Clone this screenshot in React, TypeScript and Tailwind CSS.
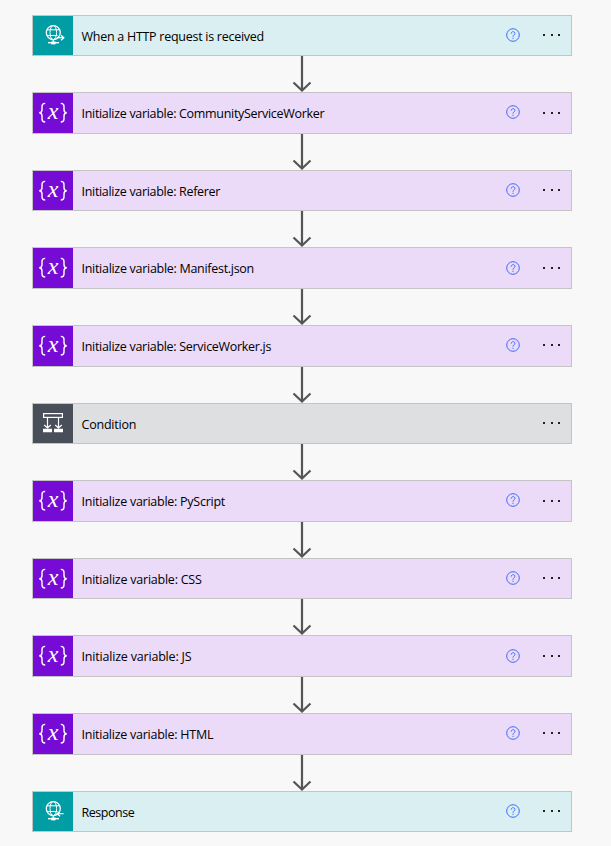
import React from "react";

type Kind = "request" | "variable" | "condition" | "response";

interface Step {
  kind: Kind;
  label: string;
  tracking: string;
}

const steps: Step[] = [
  { kind: "request", label: "When a HTTP request is received", tracking: "tracking-[-0.27px]" },
  { kind: "variable", label: "Initialize variable: CommunityServiceWorker", tracking: "tracking-[-0.31px]" },
  { kind: "variable", label: "Initialize variable: Referer", tracking: "tracking-[-0.31px]" },
  { kind: "variable", label: "Initialize variable: Manifest.json", tracking: "tracking-[-0.29px]" },
  { kind: "variable", label: "Initialize variable: ServiceWorker.js", tracking: "tracking-[-0.3px]" },
  { kind: "condition", label: "Condition", tracking: "tracking-[-0.22px]" },
  { kind: "variable", label: "Initialize variable: PyScript", tracking: "tracking-[-0.26px]" },
  { kind: "variable", label: "Initialize variable: CSS", tracking: "tracking-[-0.23px]" },
  { kind: "variable", label: "Initialize variable: JS", tracking: "tracking-[-0.19px]" },
  { kind: "variable", label: "Initialize variable: HTML", tracking: "tracking-[-0.25px]" },
  { kind: "response", label: "Response", tracking: "tracking-[-0.45px]" },
];

const cardColor: Record<Kind, string> = {
  request: "bg-[#d9eff1]",
  response: "bg-[#d9eff1]",
  variable: "bg-[#ebdaf8]",
  condition: "bg-[#dddfe1]",
};

const tileColor: Record<Kind, string> = {
  request: "bg-[#009da5]",
  response: "bg-[#009da5]",
  variable: "bg-[#770bd6]",
  condition: "bg-[#484f58]",
};

const labelOffset: Record<Kind, string> = {
  request: "pt-[3.2px]",
  response: "pt-[3.2px]",
  variable: "pt-[2.2px]",
  condition: "pt-[3.2px]",
};

function GlobeIcon({ incoming }: { incoming: boolean }) {
  return (
    <svg width="40" height="40" viewBox="0 0 40 40" fill="none" stroke="#fff" strokeWidth="1">
      <circle cx="20.3" cy="17.6" r="7" strokeWidth="1.3" />
      <ellipse cx="20.3" cy="17.6" rx="3.3" ry="7" />
      <path d="M14 14.8h12.6M13.5 20.5h11" />
      <path d="M20.3 24.5v2" strokeWidth="1.4" />
      <path d="M15 27.7h11" strokeWidth="1.4" />
      <path d="M18.3 27.9h4.2" strokeWidth="3" />
      {incoming ? (
        <path d="M30.5 22.7h-6M27 20.2l-2.8 2.5L27 25.2" strokeWidth="1.3" />
      ) : (
        <path d="M24 22.7h6M28 20.2l2.8 2.5L28 25.2" strokeWidth="1.3" />
      )}
    </svg>
  );
}

function VariableIcon() {
  return (
    <svg width="40" height="40" viewBox="0 0 40 40" fill="none" stroke="#fff" strokeWidth="1.4">
      <path d="M12.2 10.4c-2.6 0-3.2 1.1-3.2 3v3.1c0 2-.8 3.2-2.8 3.2 2 0 2.800 1.200 2.800 3.200v3.100c0 1.900.6 3 3.200 3" />
      <path d="M27.800 10.400c2.600 0 3.200 1.100 3.200 3v3.100c0 2 .8 3.200 2.800 3.200-2 0-2.800 1.200-2.800 3.200v3.100c0 1.900-.6 3-3.200 3" />
      <text
        x="20"
        y="26"
        textAnchor="middle"
        fill="#fff"
        stroke="none"
        className="font-['Liberation_Serif',serif] text-[24px] italic"
      >
        x
      </text>
    </svg>
  );
}

function ConditionIcon() {
  return (
    <svg width="40" height="40" viewBox="0 0 40 40" fill="none" stroke="#fff" strokeWidth="1.2">
      <rect x="10.6" y="10.6" width="18.8" height="3.8" />
      <path d="M14.5 14.5v10.5M25.5 14.5v10.5M11.2 22l3.3 3 3.3-3M22.2 22l3.3 3 3.3-3" />
      <path d="M10 27.5h9M21 27.5h9" strokeWidth="3.4" />
    </svg>
  );
}

function StepIcon({ kind }: { kind: Kind }) {
  if (kind === "variable") return <VariableIcon />;
  if (kind === "condition") return <ConditionIcon />;
  return <GlobeIcon incoming={kind === "response"} />;
}

function HelpIcon() {
  return (
    <svg width="14" height="14" viewBox="0 0 14 14" fill="none" stroke="#3d6cff" strokeWidth="1">
      <circle cx="7" cy="7" r="6.3" />
      <path d="M5.2 5.6c0-2.5 3.7-2.5 3.7-.2 0 1.5-1.9 1.5-1.9 3.3M7 9.8v1.1" />
    </svg>
  );
}

function Connector() {
  return (
    <div className="flex h-9 justify-center">
      <svg className="block" width="20" height="36" viewBox="0 0 20 36" fill="none" stroke="#555" strokeWidth="2.2">
        <path d="M10 0v34.5M1.5 26.5l8.5 8 8.5-8" />
      </svg>
    </div>
  );
}

function Card({ step }: { step: Step }) {
  return (
    <div className={`flex h-[41.6px] items-center border border-[#c4c4c4] ${cardColor[step.kind]}`}>
      <div className={`flex w-10 shrink-0 items-center justify-center self-stretch ${tileColor[step.kind]}`}>
        <StepIcon kind={step.kind} />
      </div>
      <span
        className={`ml-[8.5px] flex-1 whitespace-nowrap text-[12.5px] leading-5 text-black ${labelOffset[step.kind]} ${step.tracking}`}
      >
        {step.label}
      </span>
      {step.kind !== "condition" && (
        <button className="-mt-[1.2px] mr-[23px]" aria-label="Help">
          <HelpIcon />
        </button>
      )}
      <button className="-mt-[0.6px] mr-[11px] flex w-[17px] justify-between" aria-label="More">
        <i className="size-[2px] bg-[#222]" />
        <i className="size-[2px] bg-[#222]" />
        <i className="size-[2px] bg-[#222]" />
      </button>
    </div>
  );
}

export default function App() {
  return (
    <main className="h-[846px] w-[611px] overflow-hidden bg-[#f8f8f8] pl-8 pt-[14.6px] font-['Open_Sans','Noto_Sans',sans-serif]">
      <div className="flex w-[540px] flex-col">
        {steps.map((step, i) => (
          <React.Fragment key={step.label}>
            {i > 0 && <Connector />}
            <Card step={step} />
          </React.Fragment>
        ))}
      </div>
    </main>
  );
}
